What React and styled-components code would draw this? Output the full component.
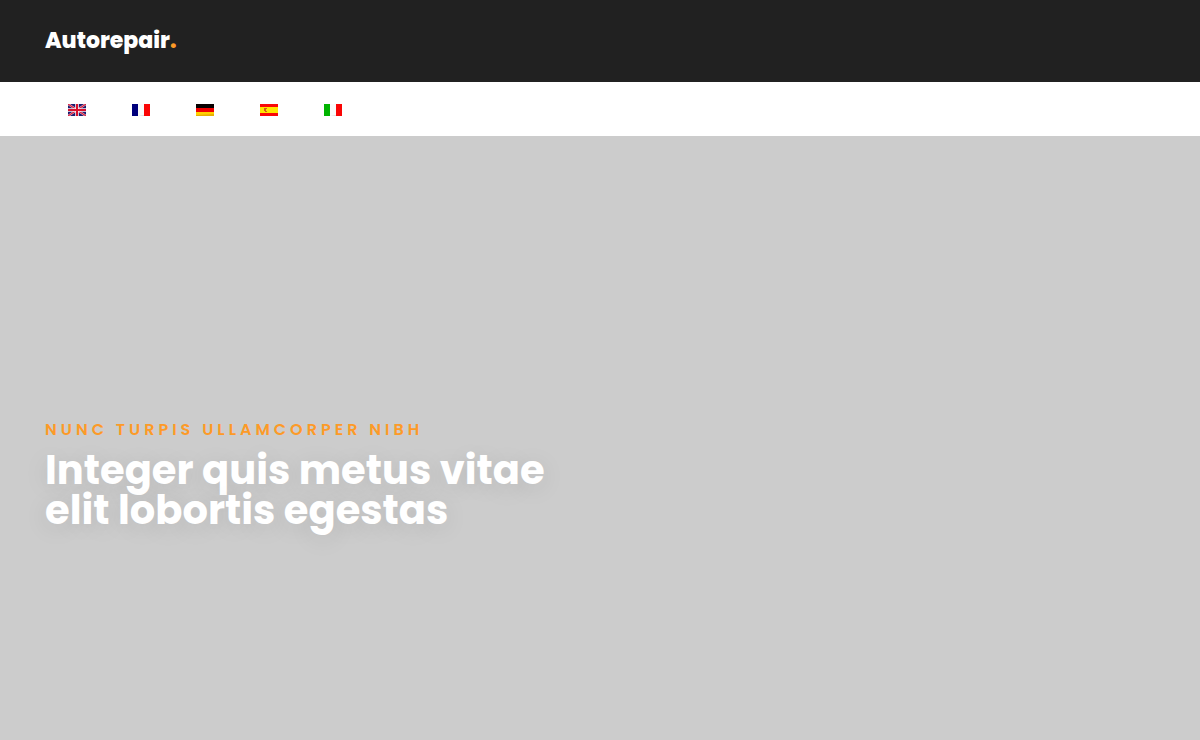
import React from "react";

import styled, { createGlobalStyle } from "styled-components";

const brand = "Autorepair";

const subtitle = "Nunc turpis ullamcorper nibh";

const title = ["Integer quis metus vitae", "elit lobortis egestas"];

const languages = [
  { code: "en", name: "English", Flag: FlagEnglish },
  { code: "fr", name: "Français", Flag: FlagFrench },
  { code: "de", name: "Deutsch", Flag: FlagGerman },
  { code: "es", name: "Español", Flag: FlagSpanish },
  { code: "it", name: "Italiano", Flag: FlagItalian },
];

function FlagEnglish() {
  return (
    <Flag viewBox="0 0 18 12" aria-hidden="true">
      <rect width="18" height="12" fill="#1c1c70" />
      <path d="M0 0L18 12M18 0L0 12" stroke="#f0c8d2" strokeWidth="2.2" />
      <path d="M0 0L18 12M18 0L0 12" stroke="#d8203c" strokeWidth="1.2" />
      <path d="M9 0V12M0 6H18" stroke="#fbf0f3" strokeWidth="3.6" />
      <path d="M9 0V12M0 6H18" stroke="#d8102c" strokeWidth="2" />
    </Flag>
  );
}

function FlagFrench() {
  return (
    <Flag viewBox="0 0 18 12" aria-hidden="true">
      <rect width="6" height="12" fill="#00007c" />
      <rect x="6" width="6" height="12" fill="#fafafa" />
      <rect x="12" width="6" height="12" fill="#fa0505" />
      <path d="M6 12L12 11V12Z" fill="#dddddd" />
    </Flag>
  );
}

function FlagGerman() {
  return (
    <Flag viewBox="0 0 18 12" aria-hidden="true">
      <rect width="18" height="4" fill="#080000" />
      <rect y="4" width="18" height="4" fill="#f00000" />
      <rect y="8" width="18" height="4" fill="#ffd000" />
      <path d="M0 12V11L18 10V12Z" fill="#e8b000" />
    </Flag>
  );
}

function FlagSpanish() {
  return (
    <Flag viewBox="0 0 18 12" aria-hidden="true">
      <rect width="18" height="12" fill="#fa0808" />
      <rect y="3" width="18" height="6" fill="#ffe600" />
      <path d="M4 4H7V5H6V7H7V8H5V7H4Z" fill="#d85a18" />
    </Flag>
  );
}

function FlagItalian() {
  return (
    <Flag viewBox="0 0 18 12" aria-hidden="true">
      <rect width="6" height="12" fill="#00b400" />
      <rect x="6" width="6" height="12" fill="#fafafa" />
      <rect x="12" width="6" height="12" fill="#fa0505" />
      <path d="M6 12L12 11V12Z" fill="#dddddd" />
    </Flag>
  );
}

const App = () => {
  return (
    <Container>
      <GlobalStyle />
      <Header>
        <Brand href="#home">
          {brand}
          <Dot>.</Dot>
        </Brand>
      </Header>
      <Languages aria-label="Languages">
        {languages.map(({ code, name, Flag: Icon }) => (
          <LanguageLink key={code} href={"#" + code} aria-label={name}>
            <Icon />
          </LanguageLink>
        ))}
      </Languages>
      <Hero>
        <Subtitle>{subtitle}</Subtitle>
        <Title>
          {title[0]}
          <br />
          {title[1]}
        </Title>
      </Hero>
    </Container>
  );
};

export default App;

const GlobalStyle = createGlobalStyle`
  * {
    box-sizing: border-box;
  }

  body {
    margin: 0;
    font-family: Poppins, Inter, "Open Sans", sans-serif;
  }
`;

const Container = styled.div`
  display: flex;
  flex-direction: column;
  min-height: 100vh;
`;

const Header = styled.header`
  display: flex;
  padding: 25px 45px;
  background: #212121;
`;

const Brand = styled.a`
  color: #ffffff;
  font-size: 22px;
  font-weight: 800;
  line-height: 32px;
  text-decoration: none;
`;

const Dot = styled.span`
  color: #fd9a27;
`;

const Languages = styled.nav`
  display: flex;
  padding: 0 45px;
  background: #ffffff;
`;

const LanguageLink = styled.a`
  display: flex;
  padding: 22px 23px 20px;
`;

const Flag = styled.svg`
  display: block;
  width: 18px;
  height: 12px;
`;

const Hero = styled.main`
  flex: 1;
  padding: 281px 45px 40px;
  background: #cccccc;
`;

const Subtitle = styled.p`
  margin: 0;
  color: #fd9a27;
  font-size: 16px;
  font-weight: 600;
  line-height: 26px;
  letter-spacing: 4px;
  text-transform: uppercase;
`;

const Title = styled.h1`
  margin: 7px 0 0;
  color: #ffffff;
  font-size: 40px;
  font-weight: 700;
  line-height: 40px;
  text-shadow: 0 4px 24px rgba(0, 0, 0, 0.1);
`;
